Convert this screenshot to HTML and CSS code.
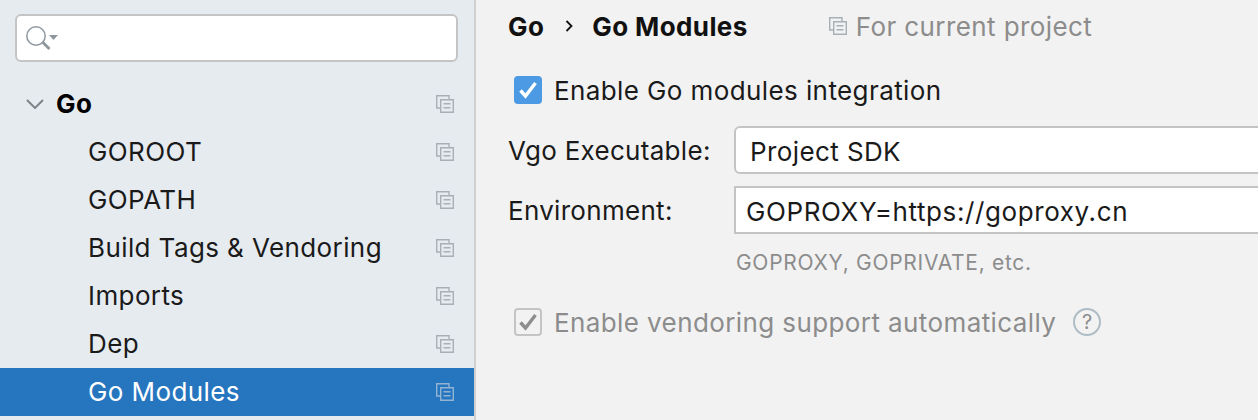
FILE: index.html
```html
<!DOCTYPE html>
<html lang="en">
<head>
    <meta charset="UTF-8" />
    <meta name="viewport" content="width=device-width, initial-scale=1" />
    <title>Go Modules</title>
    <link rel="stylesheet" href="styles.css">
</head>
<body>
<svg class="defs" width="0" height="0">
    <symbol id="copy" viewBox="0 0 18 18">
        <path d="M4.500 13H.7V.7h12.300v3.800" fill="none" stroke="currentColor" stroke-width="1.400"/>
        <path d="M4.700 4.700h12.600v12.600H4.700z" fill="none" stroke="currentColor" stroke-width="1.400"/>
        <path d="M7.500 8h7v1.600h-7zM7.500 12h7v1.600h-7z" fill="currentColor"/>
    </symbol>
</svg>
<div class="window">
    <aside class="sidebar">
        <div class="search">
            <svg class="search-icon" width="34" height="26" viewBox="0 0 34 26">
                <circle cx="10" cy="11" r="9.200" fill="none" stroke="#8f979e" stroke-width="1.500"/>
                <path d="M16.500 17l7 7" stroke="#8f979e" stroke-width="2.800" fill="none"/>
                <path d="M23 10h9l-4.500 5z" fill="#8f979e"/>
            </svg>
        </div>
        <ul class="tree">
            <li class="row row-root">
                <svg class="chevron" width="18" height="10" viewBox="0 0 18 10">
                    <path d="M1 1l8 8 8-8" fill="none" stroke="#7f8489" stroke-width="2"/>
                </svg>
                <span class="row-name">Go</span>
                <svg class="copy"><use href="#copy"/></svg>
            </li>
            <li class="row"><span class="row-name">GOROOT</span><svg class="copy"><use href="#copy"/></svg></li>
            <li class="row"><span class="row-name">GOPATH</span><svg class="copy"><use href="#copy"/></svg></li>
            <li class="row"><span class="row-name">Build Tags &amp; Vendoring</span><svg class="copy"><use href="#copy"/></svg></li>
            <li class="row"><span class="row-name">Imports</span><svg class="copy"><use href="#copy"/></svg></li>
            <li class="row"><span class="row-name">Dep</span><svg class="copy"><use href="#copy"/></svg></li>
            <li class="row selected"><span class="row-name">Go Modules</span><svg class="copy"><use href="#copy"/></svg></li>
        </ul>
    </aside>
    <main class="content">
        <header class="crumbs">
            <span class="crumb">Go</span>
            <svg class="crumb-sep" width="8" height="14" viewBox="0 0 8 14">
                <path d="M1.500 2l5 5-5 5" fill="none" stroke="#111" stroke-width="1.800"/>
            </svg>
            <span class="crumb">Go Modules</span>
            <span class="scope">
                <svg class="copy"><use href="#copy"/></svg>
                For current project
            </span>
        </header>
        <div class="check-line">
            <span class="box box-on">
                <svg width="20" height="18" viewBox="0 0 20 18">
                    <path d="M2.500 9.500l5 5.500 10-13" fill="none" stroke="#fff" stroke-width="3.400"/>
                </svg>
            </span>
            <span>Enable Go modules integration</span>
        </div>
        <div class="form">
            <label class="field-label">Vgo Executable:</label>
            <div class="combo">Project SDK</div>
            <label class="field-label">Environment:</label>
            <div class="field">GOPROXY=https://goproxy.cn</div>
            <p class="hint">GOPROXY, GOPRIVATE, etc.</p>
        </div>
        <div class="check-line disabled">
            <span class="box box-off">
                <svg width="20" height="18" viewBox="0 0 20 18">
                    <path d="M2.500 9.500l5 5.500 10-13" fill="none" stroke="#8e8e8e" stroke-width="3.400"/>
                </svg>
            </span>
            <span>Enable vendoring support automatically</span>
            <span class="help">?</span>
        </div>
    </main>
</div>
</body>
</html>
```

FILE: styles.css
```css
* {
    box-sizing: border-box;
}
html, body {
    margin: 0;
    height: 100%;
    overflow: hidden;
}
body {
    font-family: Inter, 'Noto Sans', sans-serif;
    font-size: 26px;
    letter-spacing: 0.4px;
    color: #1a1a1a;
    background-color: #f2f2f2;
}
.defs {
    position: absolute;
}
.window {
    display: flex;
    height: 420px;
}

/* left tree */
.sidebar {
    width: 476px;
    flex: none;
    padding-top: 14px;
    background-color: #e6ebf0;
    border-right: 2px solid #d1d1d1;
}
.search {
    display: flex;
    align-items: center;
    width: 443px;
    height: 48px;
    margin-left: 15px;
    padding-left: 9px;
    background: #fff;
    border: 2px solid #c4c4c4;
    border-radius: 6px;
}
.tree {
    list-style: none;
    margin: 18px 0 0;
    padding: 0;
}
.row {
    display: flex;
    align-items: center;
    height: 48px;
    padding: 0 20px 0 88px;
}
.row-name {
    flex: 1;
    padding-bottom: 2px;
}
.row-root {
    padding-left: 26px;
    font-weight: 700;
    color: #000;
}
.chevron {
    margin-right: 12px;
}
.copy {
    width: 18px;
    height: 18px;
    flex: none;
    color: #a8b0b7;
}
.selected {
    background-color: #2675bf;
    color: #fff;
}
.selected .copy {
    color: #93b3d3;
}

/* right panel */
.content {
    flex: 1;
    min-width: 0;
    padding-left: 32px;
}
.crumbs {
    display: flex;
    align-items: center;
    height: 52px;
}
.crumb {
    font-weight: 700;
    color: #111;
}
.crumb-sep {
    margin: 0 19px 0 21px;
}
.scope {
    display: flex;
    align-items: center;
    gap: 9px;
    margin-left: 81px;
    color: #8c8c8c;
}
.check-line {
    display: flex;
    align-items: center;
    height: 28px;
    margin: 24px 0 0 6px;
}
.box {
    display: flex;
    align-items: center;
    justify-content: center;
    width: 28px;
    height: 28px;
    margin-right: 12px;
    border-radius: 4px;
}
.box-on {
    background-color: #4b9ae3;
}
.box-off {
    border: 2px solid #c4c4c4;
}
.form {
    display: grid;
    grid-template-columns: 226px 1fr;
    row-gap: 12px;
    align-items: center;
    margin-top: 22px;
}
.field-label {
    color: #1a1a1a;
    letter-spacing: 0.3px;
}
.combo, .field {
    height: 48px;
    margin-right: -12px;
    line-height: 47px;
    background: #fff;
    border: 2px solid #c4c4c4;
}
.combo {
    padding-left: 14px;
    border-radius: 6px;
}
.field {
    padding-left: 10px;
    letter-spacing: 0.6px;
}
.hint {
    grid-column: 2;
    margin: 4px 0 0 2px;
    font-size: 21px;
    letter-spacing: 0.7px;
    color: #8c8c8c;
}
.disabled {
    margin-top: 33px;
    color: #8c8c8c;
}
.help {
    display: flex;
    align-items: center;
    justify-content: center;
    width: 28px;
    height: 28px;
    margin-left: 17px;
    border: 2px solid #aebcc6;
    border-radius: 50%;
    font-size: 20px;
    color: #8c8c8c;
}
```
